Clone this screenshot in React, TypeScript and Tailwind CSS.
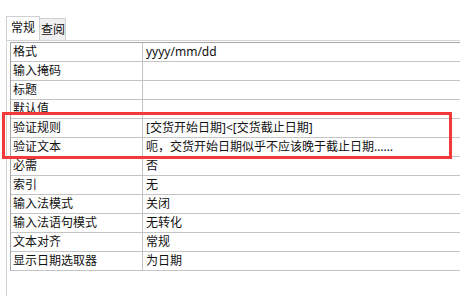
import React from 'react';

const rows: [string, string][] = [
    ['格式', 'yyyy/mm/dd'],
    ['输入掩码', ''],
    ['标题', ''],
    ['默认值', ''],
    ['验证规则', '[交货开始日期]<[交货截止日期]'],
    ['验证文本', '呃，交货开始日期似乎不应该晚于截止日期……'],
    ['必需', '否'],
    ['索引', '无'],
    ['输入法模式', '关闭'],
    ['输入法语句模式', '无转化'],
    ['文本对齐', '常规'],
    ['显示日期选取器', '为日期'],
];

const App: React.FC = () => {
    return (
        <div
            className="relative w-[460px] h-[296px] overflow-hidden bg-white text-[12px] text-[#111]"
            style={{ fontFamily: '"Microsoft YaHei", "Noto Sans", "Noto Sans CJK SC", sans-serif' }}
        >
            {/* tabs */}
            <div className="flex items-end pt-[16px] pl-[6px] h-[40px] whitespace-nowrap">
                <div className="h-[24px] border border-b-0 border-[#d0d0d0] bg-white pl-[4px] pr-[4px] leading-[22px] text-[12px]">
                    常规
                </div>
                <div className="h-[22px] border border-l-0 border-b-0 border-[#d0d0d0] bg-[#f0f0f0] pl-[1px] leading-[22px] text-[12px]">
                    查阅
                </div>
            </div>

            {/* panel */}
            <div className="ml-[6px] border-l border-t border-[#d4d4d4] pl-[3px] pt-[1px] h-[256px]">
                <div className="border-t border-l border-[#a8a8a8]">
                    {rows.map(([label, value]) => (
                        <div key={label} className="grid grid-cols-[132px_1fr] h-[19px] border-b border-[#c4c4c4]">
                            <div className="border-r border-[#c4c4c4] pl-[2px] leading-[18px] whitespace-nowrap">{label}</div>
                            <div className="pl-[3px] leading-[18px] whitespace-nowrap">{value}</div>
                        </div>
                    ))}
                </div>
            </div>

            {/* highlight */}
            <div className="absolute left-[2px] top-[112px] w-[450px] h-[47px] border-[3px] border-[#f23a3a]" />
        </div>
    );
};

export default App;
